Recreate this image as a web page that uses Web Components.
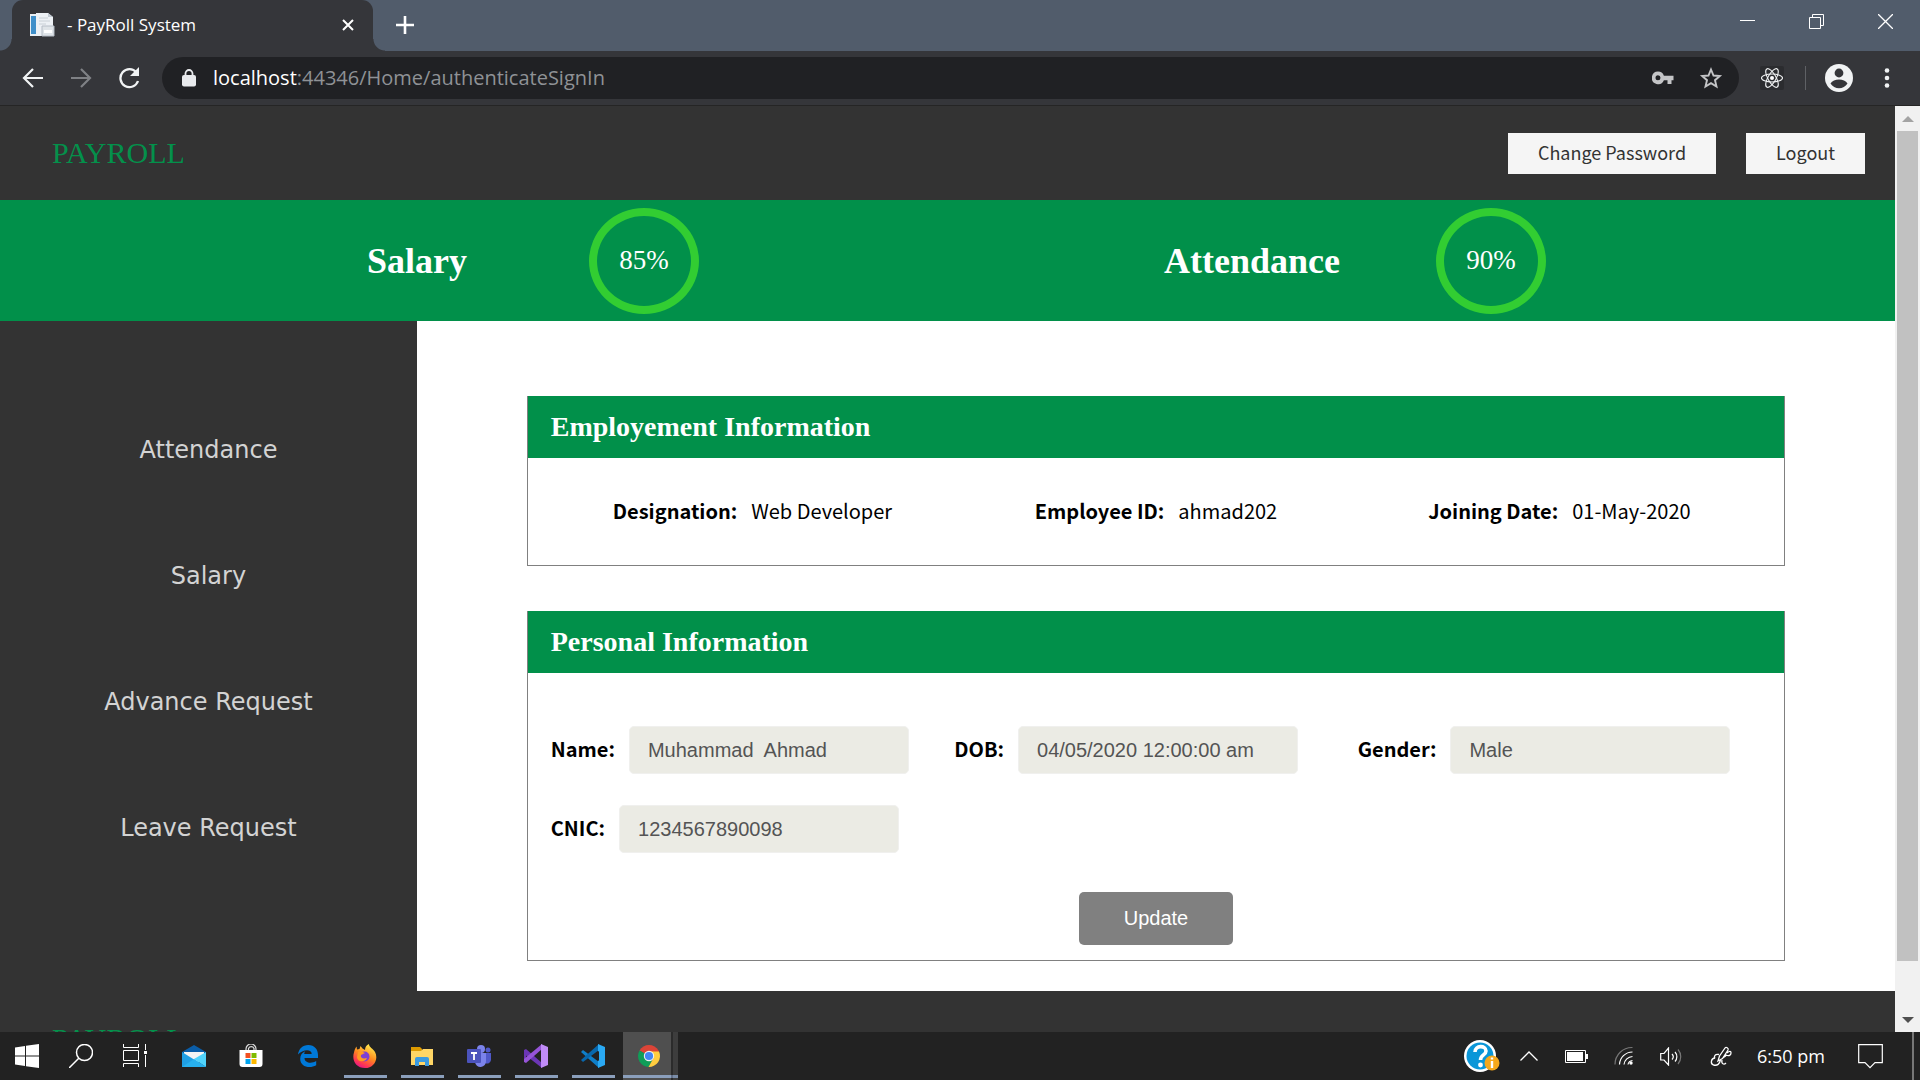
<!DOCTYPE html>
<html lang="en">
<head>
<meta charset="utf-8">
<title>- PayRoll System</title>
<style>
  html, body { margin: 0; height: 100%; overflow: hidden; }
  body { font-family: "Noto Sans CJK SC", "Open Sans", sans-serif; background: #202124; }
</style>
</head>
<body>
<desktop-shell>
  <browser-tabs slot="tabs"></browser-tabs>
  <browser-toolbar slot="toolbar"></browser-toolbar>
  <payroll-page slot="page">
    <site-header slot="header"></site-header>
    <stat-band slot="band"></stat-band>
    <side-nav slot="nav"></side-nav>
    <info-card heading="Employement Information">
      <employment-facts></employment-facts>
    </info-card>
    <info-card heading="Personal Information">
      <personal-form></personal-form>
    </info-card>
    <site-footer slot="footer"></site-footer>
  </payroll-page>
  <scroll-bar slot="scroll"></scroll-bar>
  <task-bar slot="taskbar"></task-bar>
</desktop-shell>

<script>
const define = (name, markup) => customElements.define(name, class extends HTMLElement {
  constructor() {
    super();
    const t = document.createElement('template');
    t.innerHTML = '<style>*{box-sizing:border-box}svg{display:block}</style>' + (typeof markup === 'function' ? markup(this) : markup);
    this.attachShadow({ mode: 'open' }).append(t.content.cloneNode(true));
  }
});

define('desktop-shell', `
<style>
  :host { display: grid; height: 100vh; grid-template-rows: auto auto minmax(0, 1fr) auto; }
  .view { display: grid; grid-template-columns: minmax(0, 1fr) auto; min-height: 0; border-top: 1px solid #252525; overflow: hidden; background: #333; }
  .page { min-height: 0; overflow: hidden; }
</style>
<slot name="tabs"></slot>
<slot name="toolbar"></slot>
<div class="view"><div class="page"><slot name="page"></slot></div><slot name="scroll"></slot></div>
<slot name="taskbar"></slot>`);

define('browser-tabs', `
<style>
  :host { display: flex; justify-content: space-between; height: 51px; background: #515c6b; color: #fff; padding-left: 12px; }
  .left, .tab, .win { display: flex; align-items: center; }
  .tab { position: relative; width: 361px; height: 51px; padding: 0 15px 2px 17px; background: #35363a; border-radius: 11px 11px 0 0; font: 17px/24px "Open Sans", sans-serif; }
  .tab::before, .tab::after { content: ""; position: absolute; bottom: 0; width: 12px; height: 12px; }
  .tab::before { left: -12px; background: radial-gradient(circle at 0 0, transparent 11px, #35363a 12px); }
  .tab::after { right: -12px; background: radial-gradient(circle at 100% 0, transparent 11px, #35363a 12px); }
  .title { flex: 1; padding-left: 12px; }
  button { border: 0; padding: 0; margin: 0; background: none; color: #fff; display: grid; place-items: center; }
  .tab button { width: 20px; height: 24px; }
  .new { width: 64px; height: 49px; }
  .left { align-items: flex-start; }
  .win button { width: 69px; height: 43px; }
  .win { align-items: flex-start; }
</style>
<div class="left">
  <div class="tab">
    <svg width="26" height="26" viewBox="0 0 26 26"><path d="M1 2h14v22H1z" fill="#e8eef3"/><path d="M2 4h5v18H2z" fill="#3f8fc9"/><path d="M7 1h12l5 4v19H7z" fill="#edf1f5"/><path d="M19 1l5 4h-5z" fill="#c3cbd3"/><path d="M10 6h9M10 9h11M10 12h7" stroke="#c9d0d6"/><path d="M13 14h12v10H13z" fill="#dfe4e8" stroke="#b6bdc6"/><path d="M15 18h8v3h-8z" fill="#fff"/></svg>
    <span class="title">- PayRoll System</span>
    <button aria-label="Close tab"><svg width="14" height="14" viewBox="0 0 14 14"><path d="M2 2l10 10M12 2L2 12" stroke="currentColor" stroke-width="2"/></svg></button>
  </div>
  <button class="new" aria-label="New tab"><svg width="18" height="18" viewBox="0 0 18 18"><path d="M9 0v18M0 9h18" stroke="currentColor" stroke-width="2.6"/></svg></button>
</div>
<div class="win">
  <button aria-label="Minimize"><svg width="15" height="15"><path d="M0 6.500h15" stroke="#fff"/></svg></button>
  <button aria-label="Restore"><svg width="15" height="15"><path d="M.5 3.500h11v11H.5zM3.500 3.500v-3h11v11h-3" fill="none" stroke="#fff"/></svg></button>
  <button aria-label="Close window"><svg width="15" height="15"><path d="M0 0l15 15M15 0L0 15" stroke="#fff" stroke-width="1.300"/></svg></button>
</div>`);

define('browser-toolbar', `
<style>
  :host { display: flex; align-items: center; height: 54px; background: #35363a; color: #f1f3f4; padding: 0 21px 0 20px; }
  button { border: 0; padding: 0; background: none; color: inherit; display: grid; place-items: center; height: 42px; }
  .nav { display: flex; gap: 23px; padding-right: 21px; }
  .nav button { width: 25px; }
  .omni { flex: 1; display: flex; align-items: center; height: 42px; border-radius: 21px; background: #202124; padding: 0 16px 0 20px; color: #9aa0a6; font: 20px/28px "Open Sans", sans-serif; }
  .url { flex: 1; padding-left: 17px; color: #8f9296; }
  .url b { color: #fff; font-weight: 400; }
  .acts { display: flex; gap: 25px; color: #c4c5c7; }
  .right { display: flex; align-items: center; padding-left: 21px; }
  .sep { width: 1px; height: 24px; background: #5f6165; margin: 0 19px 0 21px; }
  .menu { width: 24px; margin-left: 22px; }
</style>
<div class="nav">
  <button aria-label="Back"><svg width="22" height="22" viewBox="0 0 22 22"><path d="M21 11H3M11 2l-9 9 9 9" fill="none" stroke="currentColor" stroke-width="2.200"/></svg></button>
  <button aria-label="Forward" style="color:#7f8185"><svg width="22" height="22" viewBox="0 0 22 22"><path d="M1 11h18M11 2l9 9-9 9" fill="none" stroke="currentColor" stroke-width="2.200"/></svg></button>
  <button aria-label="Reload"><svg width="22" height="22" viewBox="0 0 22 22"><path d="M18.500 5.500A9 9 0 1 0 20 14" fill="none" stroke="currentColor" stroke-width="2.300"/><path d="M21 0v9h-9z" fill="currentColor"/></svg></button>
</div>
<div class="omni">
  <svg width="14" height="18" viewBox="0 0 14 18"><rect y="6" width="14" height="11.500" rx="2" fill="#e8eaed"/><path d="M3.500 7V4.500a3.500 3.500 0 0 1 7 0V7" fill="none" stroke="#e8eaed" stroke-width="1.800"/></svg>
  <span class="url"><b>localhost</b>:44346/Home/authenticateSignIn</span>
  <div class="acts">
    <button aria-label="Saved passwords"><svg width="22" height="14" viewBox="0 0 22 14"><path fill="currentColor" fill-rule="evenodd" d="M6 0.500a6.300 6.300 0 0 1 5.900 4.200H21.500v4.600h-2v3.700h-4V9.300h-3.600A6.300 6.300 0 1 1 6 .5zM6 4.300a2.500 2.500 0 1 0 0 5 2.500 2.500 0 0 0 0-5z"/></svg></button>
    <button aria-label="Bookmark"><svg width="24" height="24" viewBox="0 0 24 24"><path d="M12 3.500l2.500 6 6.300.500-4.800 4.200 1.500 6.300L12 17.200l-5.500 3.300L8 14.200 3.200 10l6.300-.5z" fill="none" stroke="currentColor" stroke-width="1.900"/></svg></button>
  </div>
</div>
<div class="right">
  <button aria-label="React Developer Tools"><svg width="24" height="24" viewBox="0 0 24 24"><rect width="24" height="24" rx="2" fill="#2b2c2f"/><g fill="none" stroke="#f1f3f4" stroke-width="1.100"><ellipse cx="12" cy="12" rx="10.500" ry="4"/><ellipse cx="12" cy="12" rx="10.500" ry="4" transform="rotate(60 12 12)"/><ellipse cx="12" cy="12" rx="10.500" ry="4" transform="rotate(120 12 12)"/></g><circle cx="12" cy="12" r="2" fill="#fff"/></svg></button>
  <span class="sep"></span>
  <button aria-label="Profile"><svg width="28" height="28" viewBox="0 0 28 28"><circle cx="14" cy="14" r="14" fill="#f1f3f4"/><circle cx="14" cy="9" r="4.400" fill="#35363a"/><path d="M5.500 19.500c1.500-2.800 5-4 8.500-4s7 1.200 8.500 4c-2 3-5 4.800-8.500 4.800s-6.500-1.800-8.500-4.800z" fill="#35363a"/></svg></button>
  <button class="menu" aria-label="Menu"><svg width="6" height="20" viewBox="0 0 6 20"><g fill="#f1f3f4"><circle cx="3" cy="2.500" r="2.300"/><circle cx="3" cy="10" r="2.300"/><circle cx="3" cy="17.500" r="2.300"/></g></svg></button>
</div>`);

define('scroll-bar', `
<style>
  :host { display: flex; flex-direction: column; width: 25px; background: #f1f1f1; }
  .arrow { height: 25px; display: grid; place-items: center; }
  .track { flex: 1; padding: 0 2px; }
  .thumb { height: 94.700%; background: #c1c1c1; }
</style>
<div class="arrow"><svg width="12" height="6"><path d="M0 6l6-6 6 6z" fill="#a3a3a3"/></svg></div>
<div class="track"><div class="thumb"></div></div>
<div class="arrow"><svg width="12" height="6"><path d="M0 0h12l-6 6z" fill="#505050"/></svg></div>`);

define('payroll-page', `
<style>
  :host { display: block; }
  .body { display: grid; grid-template-columns: 22% minmax(0, 1fr); background: #333; }
  main { display: flex; flex-direction: column; align-items: center; gap: 45px; background: #fff; padding: 75px 0 30px; }
</style>
<slot name="header"></slot>
<slot name="band"></slot>
<div class="body"><slot name="nav"></slot><main><slot></slot></main></div>
<slot name="footer"></slot>`);

define('site-header', `
<style>
  :host { display: flex; align-items: center; justify-content: space-between; height: 94px; padding: 0 30px 0 52px; background: #333; }
  .brand { font: 30px/36px "Liberation Serif", serif; color: #04904b; text-decoration: none; }
  .btns { display: flex; gap: 30px; }
  button { border: 0; background: #f5f5f5; color: #333; height: 41px; padding: 0 30px 2px; font: 18px/26px "Noto Sans CJK SC", sans-serif; }
</style>
<a class="brand" href="#">PAYROLL</a>
<div class="btns"><button>Change Password</button><button>Logout</button></div>`);

define('site-footer', `
<style>
  :host { display: block; padding: 30px 52px; background: #333; }
  a { font: 30px/36px "Liberation Serif", serif; color: #04904b; text-decoration: none; }
</style>
<a href="#">PAYROLL</a>`);

define('stat-band', `
<style>
  :host { display: grid; grid-template-columns: 367fr 222fr 575fr 272fr 459fr; align-items: center; height: 121px; background: #01904a; color: #fff; font-family: "Liberation Serif", serif; }
  h2 { margin: 0; font-size: 36px; line-height: 42px; }
  .ring { display: grid; place-items: center; width: 110px; height: 106px; border: 8px solid #32cd32; border-radius: 50%; padding-bottom: 2px; font-size: 27px; line-height: 32px; }
</style>
<span></span><h2>Salary</h2><div class="ring">85%</div><h2>Attendance</h2><div class="ring">90%</div>`);

define('side-nav', `
<style>
  :host { display: flex; flex-direction: column; align-items: center; gap: 98px; padding-top: 115px; background: #333; font: 24px/28px "DejaVu Sans", sans-serif; }
  a { color: #d3d3d3; text-decoration: none; }
</style>
<a href="#">Attendance</a><a href="#">Salary</a><a href="#">Advance Request</a><a href="#">Leave Request</a>`);

define('info-card', el => `
<style>
  :host { display: block; width: 85%; border: 1px solid #808080; border-top: 0; background: #fff; }
  h3 { margin: 0; padding: 15px 23px; background: #01904a; color: #fff; font: bold 28px/32px "Liberation Serif", serif; }
</style>
<h3>${el.getAttribute('heading')}</h3><slot></slot>`);

define('employment-facts', `
<style>
  :host { display: block; font-size: 20px; line-height: 28px; color: #000; }
  dl { display: grid; grid-template-columns: repeat(3, minmax(0, 1fr)); margin: 0; padding: 39px 23px 40px; }
  div { display: flex; justify-content: center; gap: 14px; }
  dt { font-weight: 700; } dd { margin: 0; }
</style>
<dl>
  <div><dt>Designation:</dt><dd>Web Developer</dd></div>
  <div><dt>Employee ID:</dt><dd>ahmad202</dd></div>
  <div><dt>Joining Date:</dt><dd>01-May-2020</dd></div>
</dl>`);

define('personal-form', `
<style>
  :host { display: block; }
  form { display: flex; flex-direction: column; align-items: center; gap: 39px; padding: 53px 23px 15px; }
  .grid { display: grid; grid-template-columns: repeat(3, minmax(0, 1fr)); row-gap: 31px; width: 100%; }
  .field { display: flex; align-items: center; gap: 14px; }
  label { font-weight: 700; font-size: 20px; line-height: 28px; padding-bottom: 2px; }
  input { width: 280px; height: 48px; border: 1px solid #f0f0ee; border-radius: 5px; background: #ebebe4; color: #545454; padding: 0 18px; font: 20px/24px "Liberation Sans", sans-serif; }
  button { border: 0; border-radius: 5px; background: #808080; color: #fff; padding: 14px 45px 15px; font: 20px/24px "Liberation Sans", sans-serif; }
</style>
<form>
  <div class="grid">
    <div class="field"><label for="name">Name:</label><input id="name" readonly value="Muhammad  Ahmad"></div>
    <div class="field"><label for="dob">DOB:</label><input id="dob" readonly value="04/05/2020 12:00:00 am"></div>
    <div class="field"><label for="gender">Gender:</label><input id="gender" readonly value="Male"></div>
    <div class="field"><label for="cnic">CNIC:</label><input id="cnic" readonly value="1234567890098"></div>
  </div>
  <button type="button">Update</button>
</form>`);

define('task-bar', `
<style>
  :host { display: flex; justify-content: space-between; height: 48px; background: #222; color: #fff; }
  .apps, .tray { display: flex; }
  button { border: 0; padding: 0; margin: 0; background: none; color: #fff; display: grid; place-items: center; height: 48px; }
  .sys { width: 54px; }
  .apps { padding-right: 8px; }
  .app { width: 57px; position: relative; }
  .pin { padding-left: 3px; display: flex; }
  .run::after { content: ""; position: absolute; left: 8px; right: 6px; bottom: 2px; height: 3px; background: #8b9fbc; }
  .active { background: linear-gradient(90deg, transparent 2px, #4f4f4f 2px 50px, #2b2b2b 50px 52px, #3d3d3d 52px); padding-right: 2px; }
  .active::after { left: 2px; right: 0; background: linear-gradient(90deg, #8b9fbc 48px, #62708a 48px 50px, #7b8da8 50px); }
  .tray { align-items: center; }
  .tray button { width: 39px; }
  .tray .help { width: 54px; }
  .tray .wide { width: 56px; }
  .tray .pen { width: 44px; }
  .tray .clock { width: auto; padding: 0 3px 0 14px; font: 18px/24px "Open Sans", sans-serif; }
  .tray .note { width: 84px; }
  .edge { width: 8px; height: 48px; border-left: 2px solid #777; }
</style>
<div class="apps">
  <button class="sys" aria-label="Start"><svg width="24" height="24" viewBox="0 0 24 24"><path fill="#fff" d="M0 3.400l10-1.400v9.500H0zM11 1.800L24 0v11.500H11zM0 12.500h10V22L0 20.600zM11 12.500h13V24l-13-1.800z"/></svg></button>
  <button class="sys" aria-label="Search"><svg width="24" height="24" viewBox="0 0 24 24" fill="none" stroke="#fff" stroke-width="1.500"><circle cx="15.500" cy="8.500" r="8"/><path d="M9.800 14.200L0 24"/></svg></button>
  <button class="sys" aria-label="Task view"><svg width="24" height="24" viewBox="0 0 24 24" fill="none" stroke="#fff"><path d="M.5 6.500h15v10H.5zM.5 0v3.500h15V0M.5 23v-3.500h15V23M22.500 0v6M22.500 11v12"/><path d="M21 7h3v3h-3z" fill="#fff" stroke="none"/></svg></button>
  <div class="pin">
  <button class="app" aria-label="Mail"><svg width="24" height="24" viewBox="0 0 24 24"><path d="M0 8l12-7 12 7v4H0z" fill="#0a5da8"/><path d="M2 8h20v10H2z" fill="#f4f4f4"/><path d="M0 8v15h24z" fill="#1f9fe4"/><path d="M24 8v15L12 15z" fill="#50d3fb"/><path d="M0 23h24L12 15z" fill="#27b0ee"/></svg></button>
  <button class="app" aria-label="Microsoft Store"><svg width="24" height="24" viewBox="0 0 24 24"><path d="M7 6V5a5 5 0 0 1 10 0v1M9.500 6V4.500a3 3 0 0 1 5.500 0V6" fill="none" stroke="#ddd" stroke-width="1.200"/><path d="M.5 6h23v14a3 3 0 0 1-3 3h-17a3 3 0 0 1-3-3z" fill="#fff"/><path d="M6.500 9h5v5h-5z" fill="#f25022"/><path d="M12.500 9h5v5h-5z" fill="#7fba00"/><path d="M6.500 15h5v5h-5z" fill="#00a4ef"/><path d="M12.500 15h5v5h-5z" fill="#ffb900"/></svg></button>
  <button class="app" aria-label="Edge"><svg width="24" height="24" viewBox="0 0 24 24"><path fill="#0078d7" d="M2 10.600C2.700 5 6.500 1 12.300 1 18.500 1 22 5.400 22 11v3H8.500c.200 5.500 7.500 5.800 11.700 3v4.300c-6.700 3.700-16 1.500-16-6.600 0-3.600 2-6.300 5-7.500-.6.800-.9 1.700-1 2.800h7.500c0-5.600-9.700-4.500-13.700.6z"/></svg></button>
  <button class="app run" aria-label="Firefox"><svg width="24" height="24" viewBox="0 0 24 24"><defs><linearGradient id="ff" x1=".8" y1="0" x2=".3" y2="1"><stop offset=".1" stop-color="#ffe14a"/><stop offset=".5" stop-color="#ff8a1e"/><stop offset=".8" stop-color="#ff3a50"/><stop offset="1" stop-color="#e31587"/></linearGradient></defs><path fill="url(#ff)" d="M3.500 2.500L4 5.500 6.500 5l1-3 2 2.500L12 6c0-3 1.500-5 4-6-.3 3 4 4.500 6 8 3.800 7-1 16-10 16S-1.500 16 1 8.500c.4-2 1-4 2.500-6z"/><circle cx="11.500" cy="12.500" r="5" fill="#7c3fd4"/><path d="M5 8c3-2 5 0 7 1l-4 2c-1 3 2 4 6 3-2 5-10 4-10-1z" fill="#ff9a22"/></svg></button>
  <button class="app run" aria-label="File Explorer"><svg width="24" height="24" viewBox="0 0 24 24"><path d="M1 3h9l2 2v4H1z" fill="#dd9a00"/><path d="M1 7h10l2-2h10v16H1z" fill="#ffd666"/><path d="M5 22v-7a2 2 0 0 1 2-2h10a2 2 0 0 1 2 2v7h-4v-4H9v4z" fill="#3c9be0"/></svg></button>
  <button class="app run" aria-label="Teams"><svg width="24" height="24" viewBox="0 0 24 24"><circle cx="14" cy="5" r="4" fill="#7b83eb"/><circle cx="21" cy="6" r="2.500" fill="#5059c9"/><path d="M16 9h8v7a4 4 0 0 1-6 3z" fill="#5059c9"/><path d="M9 9h10v8a5.500 5.500 0 0 1-11 1z" fill="#7b83eb"/><rect y="5" width="14" height="14" rx="1" fill="#4b53bc"/><path d="M4 9h6M7 9v7" stroke="#fff" stroke-width="1.800"/></svg></button>
  <button class="app run" aria-label="Visual Studio"><svg width="24" height="24" viewBox="0 0 24 24"><path d="M0 6l2-1 16 14v5L2 11.500v6L0 17z" fill="#6b36b5"/><path d="M0 18l2 1L18 5V0L0 15z" fill="#9654d8"/><path d="M17 0l7 3v18l-7 3z" fill="#c08cf7"/><path d="M17 7v10l-6-5z" fill="#222"/></svg></button>
  <button class="app run" aria-label="Visual Studio Code"><svg width="24" height="24" viewBox="0 0 24 24"><path d="M0 8l2-2 16 12v6z" fill="#0f7fc9"/><path d="M0 16l2 2L18 6V0z" fill="#0868ad"/><path d="M17 0l7 3v18l-7 3z" fill="#2aa9f3"/><path d="M18 7v10l-7-5z" fill="#222"/></svg></button>
  <button class="app run active" aria-label="Chrome"><svg width="24" height="24" viewBox="0 0 24 24"><path d="M12 12L2.500 6.500a11 11 0 0 1 19 0L22 8z" fill="#db4437"/><path d="M12 12L2.500 6.500a11 11 0 0 0 9 16.500l4-7z" fill="#0f9d58"/><path d="M12 12V7.500h10A11 11 0 0 1 11.500 23l5-9z" fill="#ffcd40"/><circle cx="12" cy="12" r="5.200" fill="#f1f1f1"/><circle cx="12" cy="12" r="4.100" fill="#4285f4"/></svg></button>
  </div>
</div>
<div class="tray">
  <button class="help" aria-label="Help"><svg width="36" height="34" viewBox="0 0 36 34"><circle cx="16" cy="17" r="16" fill="#fff"/><circle cx="16" cy="17" r="13.500" fill="#0a96d8"/><path d="M11 13c0-7 11-7 11-1 0 4-5.500 4-5.500 9" fill="none" stroke="#fff" stroke-width="3.600"/><circle cx="16.500" cy="26" r="2.400" fill="#fff"/><circle cx="28" cy="24" r="7.500" fill="#f5a81c"/><path d="M28 22v7M28 18.500v2" stroke="#fff" stroke-width="2.400"/></svg></button>
  <button aria-label="Show hidden icons"><svg width="18" height="10"><path d="M.5 9.500L9 1l8.500 8.500" fill="none" stroke="#fff" stroke-width="1.300"/></svg></button>
  <button class="wide" aria-label="Battery"><svg width="23" height="13"><path d="M.5.5h20v12H.5z" fill="none" stroke="#fff"/><path d="M2 2h16v9H2zM21 4h2v5h-2z" fill="#fff"/></svg></button>
  <button aria-label="Network"><svg width="20" height="20" viewBox="0 0 20 20" fill="none" stroke="#fff" stroke-width="1.200"><g stroke="#777"><path d="M1 18.500A17 17 0 0 1 18.500 1.500"/></g><path d="M5.500 18.500A13 13 0 0 1 18.500 6M10 18.500a9 9 0 0 1 8.500-8"/><path d="M14 18.500a5 5 0 0 1 4.500-4"/><circle cx="17" cy="17" r="1.700" fill="#fff" stroke="none"/></svg></button>
  <button class="wide" aria-label="Volume"><svg width="22" height="19" viewBox="0 0 22 19" fill="none" stroke="#fff" stroke-width="1.200"><path d="M.7 6.500H4L8.500 1v17L4 13H.7zM12 7a4 4 0 0 1 0 5.500M15 5a7 7 0 0 1 0 9.500"/><path d="M18 2.500a11 11 0 0 1 0 14.500" stroke="#777"/></svg></button>
  <button class="pen" aria-label="Ink workspace"><svg width="22" height="22" viewBox="0 0 22 22" fill="none" stroke="#fff" stroke-width="1.300"><path d="M8 16l1.500-5L15 3c1-1.500 4 0 3 2l-5.500 8.500zM9 9.500c-4-1-5.500 2-4 4M5 13c-4 0-5 6-1.500 7 4 1 6-1 7-5M13 13c1-2 3-1 3-3 2 1 5 1 5-2s-3-1-4 0M12 15c-1 4 2 5 4 3"/></svg></button>
  <button class="clock">6:50 pm</button>
  <button class="note" aria-label="Notifications"><svg width="25" height="25" viewBox="0 0 25 25"><path d="M.7.7h23.600v18H17l-5 5-5-5H.7z" fill="none" stroke="#fff" stroke-width="1.200"/></svg></button>
  <span class="edge"></span>
</div>`);
</script>
</body>
</html>
